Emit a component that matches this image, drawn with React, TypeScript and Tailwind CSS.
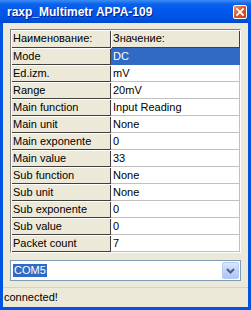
const rows: [string, string][] = [
  ['Mode', 'DC'],
  ['Ed.izm.', 'mV'],
  ['Range', '20mV'],
  ['Main function', 'Input Reading'],
  ['Main unit', 'None'],
  ['Main exponente', '0'],
  ['Main value', '33'],
  ['Sub function', 'None'],
  ['Sub unit', 'None'],
  ['Sub exponente', '0'],
  ['Sub value', '0'],
  ['Packet count', '7'],
];

const fixedCell =
  'bg-[#ECE9D8] h-[17px] pl-[2px] leading-[16px] shadow-[inset_1px_1px_0_#ffffff,inset_-1px_-1px_0_#404040] whitespace-nowrap overflow-hidden';

function CloseButton() {
  return (
    <div className="w-[14px] h-[14px] rounded-[2px] border border-white bg-[linear-gradient(135deg,#f29a76_0%,#e0562b_45%,#c8401c_100%)] flex items-center justify-center">
      <svg width="8" height="8" viewBox="0 0 8 8">
        <path d="M1 1 L7 7 M7 1 L1 7" stroke="#ffffff" strokeWidth="1.8" strokeLinecap="square" />
      </svg>
    </div>
  );
}

export default function App() {
  return (
    <div
      className="w-[251px] h-[310px] flex flex-col bg-[#0054e3] text-[11px] text-black overflow-hidden"
      style={{ fontFamily: '"Liberation Sans", Arial, sans-serif' }}
    >
      {/* title bar */}
      <div className="h-[23px] shrink-0 flex items-center justify-between pl-[7px] pr-[4px] bg-[linear-gradient(to_bottom,#3d8df5_0%,#0a62ea_18%,#0058ee_45%,#0054e3_80%,#0048cf_100%)]">
        <span className="text-white font-bold text-[12px] [text-shadow:1px_1px_#0a1883]">raxp_Multimetr APPA-109</span>
        <CloseButton />
      </div>

      {/* client area */}
      <div className="flex-1 mx-[3px] mb-[3px] bg-[#ECE9D8] flex flex-col">
        <div className="pt-[6px] px-[7px]">
          <div className="border border-t-[#808080] border-l-[#808080] border-b-white border-r-white">
            <div className="grid grid-cols-[100px_1fr]">
              <div className={fixedCell + ' h-[18px] leading-[17px]'}>Наименование:</div>
              <div className={fixedCell + ' h-[18px] leading-[17px]'}>Значение:</div>
              {rows.map(([name, value], i) => (
                <div key={name} className="contents">
                  <div className={fixedCell}>{name}</div>
                  <div
                    className={
                      i === 0
                        ? 'h-[17px] pl-[2px] leading-[16px] bg-[#316AC5] text-white'
                        : 'h-[17px] pl-[2px] leading-[16px] bg-white border-r border-b border-[#c0c0c0]'
                    }
                  >
                    {value}
                  </div>
                </div>
              ))}
            </div>
          </div>
        </div>

        {/* com port combo */}
        <div className="mt-[7px] mx-[7px] h-[21px] border border-[#7F9DB9] bg-white flex items-center pl-[2px] pr-[1px]">
          <span className="bg-[#316AC5] text-white px-[1px] leading-[13px]">COM5</span>
          <div className="ml-auto w-[17px] h-[17px] rounded-[2px] border border-[#b9cbf3] bg-[linear-gradient(to_bottom,#dce7fd_0%,#c1d3fb_50%,#b0c6f6_100%)] flex items-center justify-center">
            <svg width="9" height="6" viewBox="0 0 9 6">
              <path d="M1 1 L4.5 4.5 L8 1" stroke="#4d6185" strokeWidth="2" fill="none" />
            </svg>
          </div>
        </div>

        {/* status bar */}
        <div className="mt-auto h-[20px] border-t border-[#d6d2c2] flex items-center pl-[1px]">
          <span>connected!</span>
        </div>
      </div>
    </div>
  );
}
